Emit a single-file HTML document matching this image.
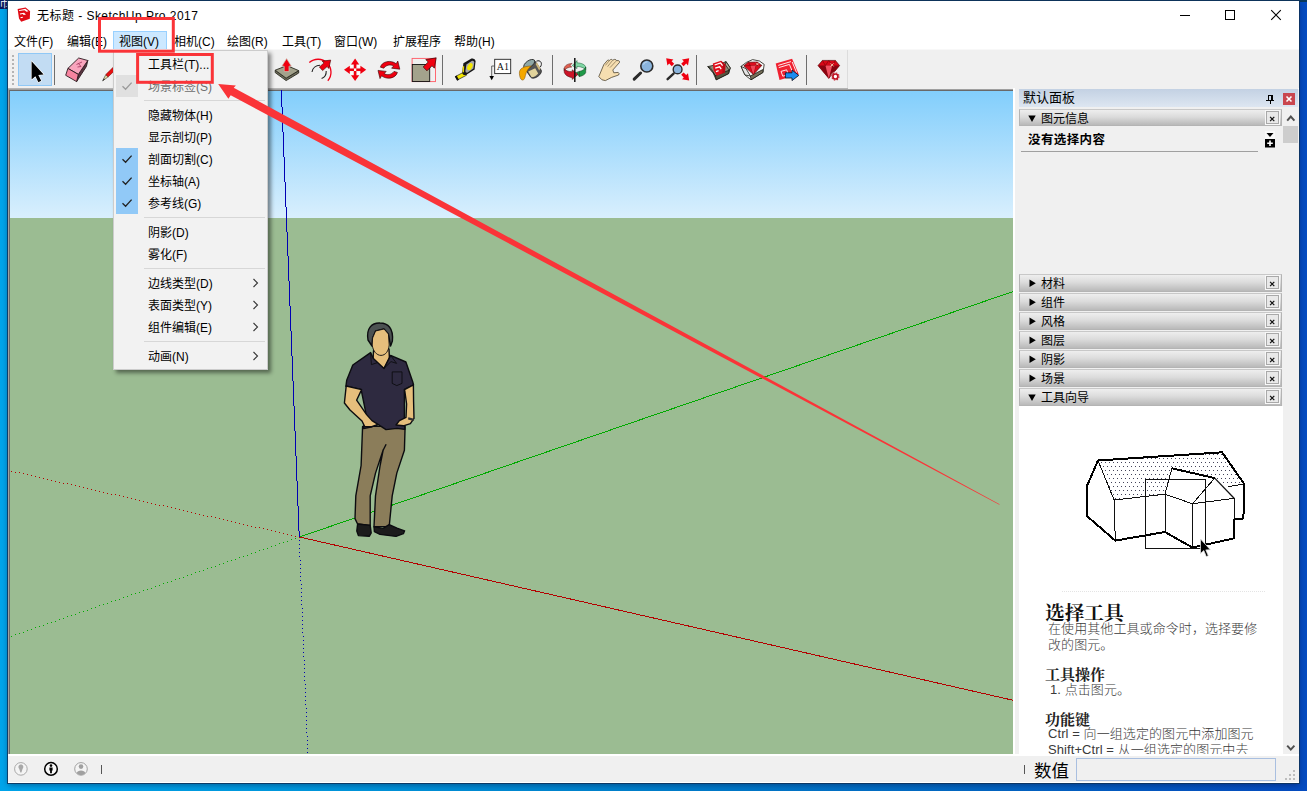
<!DOCTYPE html>
<html lang="zh-CN">
<head>
<meta charset="utf-8">
<title>无标题 - SketchUp Pro 2017</title>
<style>
*{box-sizing:border-box;margin:0;padding:0}
html,body{width:1307px;height:791px;overflow:hidden}
body{position:relative;font-family:"Liberation Sans","Noto Sans CJK SC",sans-serif;font-size:12px;color:#000;
 background:linear-gradient(90deg,#00a4ea 0%,#0096dc 25%,#0080cc 48%,#0366c2 75%,#054bc0 100%)}
.abs,.abs-all>*{position:absolute}
svg{display:block;overflow:visible}
#desk-top{left:0;top:0;width:1307px;height:2px;background:#0b3a5c}
#desk-tl{left:0;top:0;width:8px;height:9px;background:#0a1a60;color:#fff;font-size:9px;line-height:9px;overflow:hidden}
#win{left:8px;top:1px;width:1291px;height:782px;background:#f0f0f0;outline:1px solid rgba(14,50,90,.85);box-shadow:0 2px 6px 0 rgba(0,0,40,.4);border-right:1px solid #fff}
#title{left:8px;top:1px;width:1291px;height:29px;background:#fff}
#title .t{left:29px;top:7px;font-size:12px;line-height:16px;white-space:nowrap;letter-spacing:.46px}
#menubar{left:8px;top:30px;width:1291px;height:19px;background:#fff}
#menubar span{position:absolute;top:4px;line-height:16px;white-space:nowrap}
#menusel{left:105px;top:1px;width:54px;height:19px;background:#cce8ff;border:1px solid #99d1ff}
#toolbar{left:8px;top:49px;width:1291px;height:39px;background:#f0f0f0;border-top:1px solid #f8f8f8}
#vp{left:10px;top:90px;width:1003px;height:664px;overflow:hidden}
#vpborder{left:8px;top:89px;width:1005px;height:2px;background:linear-gradient(#a0a0a0 0,#a0a0a0 1px,#696969 1px)}
#tbline{left:8px;top:88px;width:840px;height:1px;background:#b4b4b4}
#vpleft{left:8px;top:90px;width:2px;height:664px;background:linear-gradient(90deg,#a0a0a0 0,#a0a0a0 1px,#696969 1px)}
#vpright{left:1013px;top:88px;width:2px;height:667px;background:#fff}
/* status */
#status{left:8px;top:754px;width:1291px;height:29px;background:linear-gradient(#fff 0,#fff 1.6px,#f0f0f0 1.6px,#f0f0f0 28px,#fff 28px)}
/* panel */
#panel{left:1019px;top:89px;width:280px;height:666px;background:#f0f0f0}
.phead{left:0;top:0;width:279px;height:18px;background:linear-gradient(#c3d1e3,#dde6f1);font-size:13px;line-height:17px}
.sec{left:0;width:263px;height:18px;border:1px solid #b4b4b4;border-top-color:#c8c8c8;background:linear-gradient(#eeeeee 0%,#dcdcdc 45%,#b9b9b9 100%);font-size:12px;line-height:16px}
.sec .tri{position:absolute;left:9px;top:0;font-size:9px;line-height:16px}
.sec .lbl{position:absolute;left:21px;top:1px;line-height:16px}
.sec .x{position:absolute;right:1px;top:0px;width:15px;height:15px;border:1px solid #f8f8f8;outline:1px solid #a9a9a9;outline-offset:-2px;background:#e9e9e9;font-size:10px;line-height:12px;text-align:center}

.gh1{font-family:"Liberation Serif","Noto Serif CJK SC",serif;font-weight:bold;font-size:19.7px;line-height:24px;white-space:nowrap;color:#111}
.gh2{font-family:"Liberation Serif","Noto Serif CJK SC",serif;font-weight:bold;font-size:15px;line-height:20px;white-space:nowrap;color:#222}
.gb{font-size:13px;line-height:16px;white-space:nowrap;color:#3a3a3a;font-weight:300;letter-spacing:.08px}
/* dropdown */
#dd{left:113px;top:50px;width:155px;height:320px;background:#f2f2f2;border:1px solid #ccc;box-shadow:3px 3px 4px rgba(0,0,0,.45)}
#dd .it{position:absolute;left:2px;width:149px;height:22px;line-height:25px}
#dd .it .tx{position:absolute;left:32px;top:0;white-space:nowrap}
#dd .it .ck{position:absolute;left:0px;top:0;width:22px;height:22px;background:#91c9f7}
#dd .it.dis{color:#6d6d6d}
#dd .it.dis .ck{background:#e0e0e0}
#dd .sep{position:absolute;left:30px;width:121px;height:1px;background:#d7d7d7}
#dd .ar{position:absolute;left:135px;top:0}
</style>
</head>
<body>
<div id="desk-top" class="abs"></div>
<div id="desk-tl" class="abs">巾</div>
<div id="win" class="abs"></div>
<div id="title" class="abs">
<svg class="abs" style="left:0;top:0" width="1291" height="29" viewBox="8 1 1291 29">
<g><path d="M17.6 9.1 L25.6 7.6 L30.1 11.2 L29.8 18.7 L21.2 21.8 L19 18.5 Z" fill="#e00a14"/>
<path d="M18.9 10.3 L25.3 8.8 L28.5 11.2 L26.5 11.7 L24.5 10.2 L19.2 11.1 Z M19.8 13.4 L24 12.8 L26 14.6 L23.7 15 L22.8 14 L20.1 14.5 Z M20.3 17.3 L22.6 16.7 L23.2 17.6 L20.9 18.3 Z" fill="#fff"/></g>
<g stroke="#000" stroke-width="1" fill="none" shape-rendering="crispEdges">
<line x1="1180" y1="15.5" x2="1190" y2="15.5"/>
<rect x="1225.5" y="10.5" width="9" height="9"/>
</g>
<path d="M1271.2 10.2 L1280.8 19.8 M1280.8 10.2 L1271.2 19.8" stroke="#000" stroke-width="1.1" fill="none"/>
</svg><span class="abs t">无标题 - SketchUp Pro 2017</span></div>
<div id="menubar" class="abs">
  <div id="menusel" class="abs"></div>
  <span style="left:6px">文件(F)</span>
  <span style="left:59px">编辑(E)</span>
  <span style="left:111px">视图(V)</span>
  <span style="left:166px">相机(C)</span>
  <span style="left:219px">绘图(R)</span>
  <span style="left:274px">工具(T)</span>
  <span style="left:326px">窗口(W)</span>
  <span style="left:385px">扩展程序</span>
  <span style="left:446px">帮助(H)</span>
</div>
<div id="toolbar" class="abs"><!--TB0--><svg class="abs" style="left:0;top:0" width="1291" height="38" viewBox="8 50 1291 38">
<!-- grip -->
<g fill="#b4b4b4" shape-rendering="crispEdges"><rect x="12" y="55" width="2" height="2"/><rect x="12" y="59" width="2" height="2"/><rect x="12" y="63" width="2" height="2"/><rect x="12" y="67" width="2" height="2"/><rect x="12" y="71" width="2" height="2"/><rect x="12" y="75" width="2" height="2"/><rect x="12" y="79" width="2" height="2"/><rect x="12" y="83" width="2" height="2"/></g>
<!-- select -->
<rect x="18.5" y="53.5" width="33" height="32" fill="#c2dcf3" stroke="#90c8f6"/>
<path d="M31.6 61.2 V79.6 L35.4 76.2 L38.4 82.2 L41.2 80.8 L38.3 75 L43.6 74.4 Z" fill="#000" stroke="#fff" stroke-width="1.2" stroke-linejoin="round" paint-order="stroke"/>
<!-- separators -->
<g stroke="#6e6e6e" stroke-width="1" shape-rendering="crispEdges"><line x1="54.5" y1="55" x2="54.5" y2="85"/><line x1="442.5" y1="55" x2="442.5" y2="85"/><line x1="552.5" y1="55" x2="552.5" y2="85"/><line x1="696.5" y1="55" x2="696.5" y2="85"/><line x1="806.5" y1="55" x2="806.5" y2="85"/></g>
<line x1="847.5" y1="50" x2="847.5" y2="88" stroke="#dcdcdc" stroke-width="1"/>
<!-- eraser -->
<g stroke="#2a1a1e" stroke-width="0.9" stroke-linejoin="round">
<path d="M87.8 60.5 L78.3 74.4 L76.6 81.6 L86.4 66.5 Z" fill="#5a3440"/>
<path d="M78.7 58 L87.8 60.5 L78.3 74.4 L67.9 68.4 Z" fill="#f9a5bd"/>
<path d="M67.9 68.4 L78.3 74.4 L76.6 81.6 L65.7 75.3 Z" fill="#f7849f"/>
</g>
<path d="M76.5 64.5 L82 62 M77.5 67 L81 66.5 L78.5 63.5" stroke="#a03058" stroke-width="0.8" fill="none"/>
<!-- pencil -->
<path d="M102.6 80.9 L105.8 74.6 L108.2 76.8 Z" fill="#e8dca0" stroke="#333" stroke-width="0.6"/>
<path d="M102.6 80.9 L103.9 78.4 L104.8 79.3 Z" fill="#111"/>
<path d="M105.8 74.6 L118 62.5 L120.5 65 L108.2 76.8 Z" fill="#e81010" stroke="#700" stroke-width="0.6"/>
<!-- push/pull -->
<g stroke="#2b2b22" stroke-width="0.9" stroke-linejoin="round">
<path d="M275.2 70.2 V72.6 L286.1 80.6 L298.7 73 V70.6 L286.1 78.2 Z" fill="#6f6e5a"/>
<path d="M275.2 70.2 L286.9 65.6 L298.7 70.6 L286.1 78.2 Z" fill="#a3a28c"/>
</g>
<path d="M284.2 71.6 V66.2 H281.8 L286.6 58.6 L291.4 66.2 H289 V71.6 Z" fill="#f00010" stroke="#c8c8b8" stroke-width="0.7"/>
<!-- follow me -->
<path d="M309.3 62.6 A13 13 0 0 1 327.8 80.8" fill="none" stroke="#f00018" stroke-width="1.3"/>
<path d="M312 72 C312.5 68 316 65.4 320 65.2 M321.6 78.6 C324.6 77.4 326.4 74.6 326.2 71" fill="none" stroke="#222" stroke-width="1.1"/>
<path d="M330.7 60.1 L322.2 61.1 L323.9 63 L319.4 67 L322.6 70.6 L327.1 66.6 L328.8 68.5 Z" fill="#f00010" stroke="#400" stroke-width="0.6" stroke-linejoin="round"/>
<!-- move -->
<g fill="#f00010">
<path d="M355.1 58.6 L359.2 64.4 H356.4 V68.6 H353.8 V64.4 H351 Z"/>
<path d="M355.1 81 L359.2 75.2 H356.4 V71 H353.8 V75.2 H351 Z"/>
<path d="M344 69.8 L349.8 65.7 V68.5 H354 V71.1 H349.8 V73.9 Z"/>
<path d="M366.2 69.8 L360.4 65.7 V68.5 H356.2 V71.1 H360.4 V73.9 Z"/>
</g>
<g fill="#fff"><rect x="350.4" y="65" width="2.4" height="2.4"/><rect x="357.4" y="65" width="2.4" height="2.4"/><rect x="350.4" y="72.2" width="2.4" height="2.4"/><rect x="357.4" y="72.2" width="2.4" height="2.4"/><rect x="354.1" y="68.8" width="2" height="2"/></g>
<!-- rotate -->
<g fill="#f00010" stroke="#300" stroke-width="0.6" stroke-linejoin="round">
<path d="M380.4 67.2 C381.8 61.4 390.8 59.4 396.2 63.8 L397.8 61 L399.8 69.2 L391.6 68.2 L393.6 66 C390.6 64 386 65 383.8 68.2 Z"/>
<path d="M397.4 72.4 C396 78.2 387 80.2 381.6 75.8 L380 78.6 L378 70.4 L386.2 71.4 L384.2 73.6 C387.2 75.6 391.8 74.6 394 71.4 Z"/>
</g>
<!-- scale -->
<rect x="412.1" y="58.4" width="23.4" height="23.2" fill="none" stroke="#ff5a64" stroke-width="0.9"/>
<rect x="412.3" y="64.5" width="17.4" height="17" fill="#a3a28c" stroke="#111" stroke-width="0.9"/>
<path d="M436.2 57.8 L425.8 59.6 L428.2 62 L423.2 67 L427 70.8 L432 65.8 L434.4 68.2 Z" fill="#f00010" stroke="#300" stroke-width="0.7" stroke-linejoin="round"/>
<!-- tape measure -->
<path d="M455.6 76.4 L464.8 71.6 L466.6 75.2 L457.4 80 Z" fill="#f5e800" stroke="#222" stroke-width="0.7"/>
<path d="M454.8 76.4 L457.2 80.8 L459 79.8 L456.6 75.4 Z" fill="#111"/>
<path d="M463.4 63.2 L471.4 58.6 Q475 57.8 475.6 61 L474.6 69.4 L466 75 Q462.6 75.6 462.2 72.4 Z" fill="#161616"/>
<path d="M466.4 64.6 L472 60.8 Q474.2 60.4 474.2 62.6 L473.4 68.4 L467.2 72.8 Q465.4 73 465.4 71 Z" fill="#a9a9a9"/>
<ellipse cx="469.9" cy="66.6" rx="2.3" ry="3.8" transform="rotate(28 469.9 66.6)" fill="#f5e800"/>
<path d="M462.6 66.8 L464.2 65.8 L464 72 L462.6 72.8 Z" fill="#e8d800"/>
<!-- text tool -->
<rect x="494.7" y="59.3" width="16" height="14.3" fill="#fff" stroke="#222" stroke-width="0.9"/>
<text x="502.8" y="69.6" font-family="Liberation Serif,serif" font-size="10" text-anchor="middle" fill="#111">A1</text>
<path d="M494.7 66 H491.7 V76.4" fill="none" stroke="#555" stroke-width="0.9"/>
<path d="M489.4 76 H494 L491.7 80.2 Z" fill="#000"/>
<!-- paint bucket -->
<path d="M536.4 61.2 C540.6 59.4 543 63.6 540.2 67.2" fill="none" stroke="#222" stroke-width="1"/>
<path d="M524 67.5 L530.7 77.2 A6.3 3.4 -35 0 0 541.1 70 L534.4 60.3 Z" fill="#555" stroke="#222" stroke-width="0.8" stroke-linejoin="round"/>
<path d="M528.2 71.6 L535.2 68.2 L538.2 73.4 Q535.4 77 531.6 77.2 Z" fill="#e2d49c"/>
<path d="M537 62.6 L540.4 68.6 L539.2 70.4 L535.6 64 Z" fill="#cdb87c"/>
<ellipse cx="529.2" cy="63.9" rx="6.3" ry="3.2" transform="rotate(-35 529.2 63.9)" fill="#8fa8a6" stroke="#222" stroke-width="0.8"/>
<path d="M519.4 73.6 C519 68.4 523.6 66.2 531.4 66 C528.6 68.2 526.4 70.8 525.4 75.6 C524.8 78.8 523.6 80.6 522 80 C520.4 79.4 519.6 76.6 519.4 73.6 Z" fill="#f5a800" stroke="#7a4a00" stroke-width="0.5"/>
<!-- orbit -->
<g stroke-width="0.5" stroke-linejoin="round">
<path d="M572.3 65.6 L577 60.6 L577 62.8 C581.5 63 585 64.6 585.7 67 L585.7 70 C584.6 68 581.4 66.6 577 66.4 L577 68.6 Z" fill="#7fd6a4" stroke="#145a30"/>
<path d="M585.7 67 L585.7 72.6 C585 74.6 582.4 76 579.4 76.6 L579.4 71.4 C582.4 70.8 585 69.2 585.7 67 Z" fill="#1f9a48" stroke="#0a3a1a"/>
<path d="M579.4 71.4 L576.4 72.4 L579.4 76.6 Z" fill="#1f9a48" stroke="#0a3a1a"/>
<path d="M572 63.4 C568 63.6 564.6 65.4 564.2 68.4 L564.2 71 C565 68.6 568 67.2 571.8 67 L570 65.4 Z" fill="#e06050" stroke="#5a1410"/>
<path d="M564.2 68.6 L564.2 72.2 C565 75.2 568.6 77.2 572.2 77.6 L572.2 79.4 L578 74.4 L572.2 69.8 L572.2 71.8 C568.6 71.6 565 70.6 564.2 68.6 Z" fill="#cc1428" stroke="#3a0a0a"/>
</g>
<line x1="574.8" y1="58" x2="574.8" y2="82" stroke="#111" stroke-width="1.5"/>
<!-- pan hand -->
<path d="M598.8 76.6 L603.8 64.6 L607.4 60.4 Q608.6 59.6 609.2 60.6 L610.6 59.6 Q612 59 612.6 60.2 L614.6 59.4 Q616 59.2 616.4 60.6 L618.4 60.6 Q620 61 619.4 62.6 L612.8 70 L613.8 72.8 L618.2 72.4 Q619.8 73.4 618.6 75 L611.6 77.4 L605.4 80.6 Q601.8 81 598.8 76.6 Z" fill="#f6deb0" stroke="#3a3020" stroke-width="0.7" stroke-linejoin="round"/>
<path d="M605.4 65.4 L609 61 M607.6 66.6 L612.2 60.8 M610 67.6 L616 61.2" stroke="#6a5a40" stroke-width="0.6" fill="none"/>
<!-- zoom -->
<line x1="640.6" y1="73" x2="634.2" y2="79.2" stroke="#2a2a2a" stroke-width="3" stroke-linecap="round"/>
<circle cx="646.8" cy="66" r="6" fill="#8ab4dc" stroke="#2a2a2a" stroke-width="1.6"/>
<path d="M643.4 64.6 A4 4 0 0 1 647.4 62" fill="none" stroke="#b8d4ee" stroke-width="1.2"/>
<!-- zoom extents -->
<line x1="673.6" y1="73.6" x2="667.6" y2="79.2" stroke="#2a2a2a" stroke-width="2.4" stroke-linecap="round"/>
<circle cx="677.6" cy="69.4" r="4.4" fill="#8ab4dc" stroke="#2a2a2a" stroke-width="1.4"/>
<g fill="#f00010">
<path d="M666.2 58.2 L673.4 59.4 L671.6 61.2 L674.2 63.8 L671.8 66.2 L669.2 63.6 L667.4 65.4 Z"/>
<path d="M689.2 58.2 L682 59.4 L683.8 61.2 L681.2 63.8 L683.6 66.2 L686.2 63.6 L688 65.4 Z"/>
<path d="M689.2 80.4 L682 79.2 L683.8 77.4 L681.2 74.8 L683.6 72.4 L686.2 75 L688 73.2 Z"/>
</g>
<!-- 3d warehouse -->
<g stroke="#1c1c14" stroke-width="0.8" stroke-linejoin="round">
<path d="M707.8 66.6 L713.2 65.4 L723.6 62.6 L726 61.6 L730.3 68 L728.6 73.6 L716.2 79.8 L713 72.6 Z" fill="#8c8b78"/>
<path d="M716.2 79.8 L715.4 75.6 L729.2 70.2 L728.6 73.6 Z" fill="#55543f"/>
<path d="M707.8 66.6 L713 72.6 L715.4 75.6 L711 68.4 Z" fill="#b4b3a0"/>
<path d="M726 61.6 L730.3 68 L729.2 70.2 L725.4 64.8 Z" fill="#b4b3a0"/>
</g>
<path d="M712.8 63.4 L721 60.8 L725.4 64.6 L725 72.6 L716.8 75.8 L713.6 70.4 Z" fill="#e0101c"/>
<path d="M721 60.8 L725.4 64.6 L725 72.6 L722.4 73.6 L722.6 65.4 Z" fill="#b80c16"/>
<path d="M714.6 65 L720.6 63 L722.6 65.6 M715.2 68.2 L719.6 66.8 L721.2 69.2 M716 71.6 L718.6 70.6" stroke="#fff" stroke-width="1.25" fill="none"/>
<!-- extension warehouse -->
<g stroke="#1c1c14" stroke-width="0.8" stroke-linejoin="round">
<path d="M741 66.4 L746.4 62.4 L752.6 59.6 L759.4 61 L764.2 64.4 L763 72.4 L751 79.8 L745 75 Z" fill="#fafafa"/>
<path d="M751 79.8 L750.4 76 L762.8 69.6 L763 72.4 Z" fill="#77705a"/>
<path d="M741 66.4 L745 75 L750.4 76 L746 68.6 Z" fill="#e4e4e4"/>
<path d="M743.8 65.8 L748.2 62.2 L757.2 62 L761.8 65.4 L753.4 74.6 Z" fill="#dc0c1c" stroke="#400" stroke-width="0.6"/>
</g>
<path d="M743.8 65.8 L761.8 65.4 M748.2 62.2 L750.4 65.7 L753.4 74.6 L755.6 65.6 L757.2 62" stroke="#600" stroke-width="0.5" fill="none"/>
<path d="M750.4 65.7 L753.4 74.6 L755.6 65.6 Z" fill="#f04858"/>
<path d="M756 62.8 L758.6 65.4 M758.6 62.8 L756 65.4" stroke="#ffe8c8" stroke-width="0.7"/>
<!-- layout -->
<path d="M775.7 63.5 L792.1 58.8 L798.8 74.4 L779.5 79.9 Z" fill="#f02030"/>
<path d="M778.2 65.4 L791 61.6 M778.8 67.6 L789.4 64.4 L792.4 71.6 M781 71.4 L786.6 69.8 L788.4 74.6 L782.8 76.2 Z M792.2 62 L796.6 72.6" stroke="#fff" stroke-width="0.9" fill="none"/>
<path d="M785.4 72.8 H792 V70 L798.8 75.4 L792 80.6 V78 H785.4 Z" fill="#1a8cf0" stroke="#0a1020" stroke-width="0.8" stroke-linejoin="round"/>
<!-- ruby -->
<path d="M818 65.6 L822.4 60.4 L835.4 60.4 L839.6 65.6 L828.8 78.4 Z" fill="#d80818" stroke="#400" stroke-width="0.6" stroke-linejoin="round"/>
<path d="M818 65.6 H839.6 L828.8 78.4 Z" fill="#8a0410"/>
<path d="M825.4 65.6 L828.8 78.4 L832.2 65.6 Z" fill="#f05060"/>
<path d="M822.4 60.4 L825.4 65.6 L828.8 60.4 L832.2 65.6 L835.4 60.4" stroke="#600" stroke-width="0.5" fill="none"/>
<path d="M830.6 63.4 L833.6 66.4 M833.6 63.4 L830.6 66.4" stroke="#ffe8c8" stroke-width="0.8"/>
<circle cx="835.4" cy="76.5" r="2.5" fill="#fff" stroke="#c01424" stroke-width="1.7"/>
<circle cx="835.4" cy="76.5" r="3.8" fill="none" stroke="#c01424" stroke-width="1.1" stroke-dasharray="1.5 1.48"/>
<circle cx="835.4" cy="76.5" r="4.5" fill="none" stroke="#f0f0f0" stroke-width="0.5"/>
</svg>
<!--TB1--></div>
<div id="tbline" class="abs"></div>
<div id="vpborder" class="abs"></div>
<div id="vpleft" class="abs"></div>
<div id="vpright" class="abs"></div>
<div id="vp" class="abs">
<svg width="1004" height="664" viewBox="10 90 1004 664">
  <defs><linearGradient id="sky" x1="0" y1="0" x2="0" y2="1"><stop offset="0" stop-color="#82cefc"/><stop offset="1" stop-color="#d9effd"/></linearGradient></defs>
  <rect x="10" y="91" width="1004" height="127" fill="url(#sky)"/>
  <rect x="10" y="218" width="1004" height="536" fill="#9bbc92"/>
  <g shape-rendering="crispEdges" fill="none" stroke-width="1">
    <g fill="#b40000"><rect x="295" y="536" width="1" height="1"/><rect x="291" y="535" width="1" height="1"/><rect x="287" y="534" width="1" height="1"/><rect x="283" y="533" width="1" height="1"/><rect x="279" y="532" width="1" height="1"/><rect x="275" y="531" width="1" height="1"/><rect x="271" y="530" width="1" height="1"/><rect x="267" y="529" width="1" height="1"/><rect x="263" y="528" width="1" height="1"/><rect x="259" y="527" width="1" height="1"/><rect x="255" y="527" width="1" height="1"/><rect x="251" y="526" width="1" height="1"/><rect x="247" y="525" width="1" height="1"/><rect x="243" y="524" width="1" height="1"/><rect x="239" y="523" width="1" height="1"/><rect x="235" y="522" width="1" height="1"/><rect x="231" y="521" width="1" height="1"/><rect x="227" y="520" width="1" height="1"/><rect x="223" y="519" width="1" height="1"/><rect x="219" y="518" width="1" height="1"/><rect x="215" y="517" width="1" height="1"/><rect x="211" y="516" width="1" height="1"/><rect x="207" y="516" width="1" height="1"/><rect x="203" y="515" width="1" height="1"/><rect x="199" y="514" width="1" height="1"/><rect x="195" y="513" width="1" height="1"/><rect x="191" y="512" width="1" height="1"/><rect x="187" y="511" width="1" height="1"/><rect x="183" y="510" width="1" height="1"/><rect x="179" y="509" width="1" height="1"/><rect x="175" y="508" width="1" height="1"/><rect x="171" y="507" width="1" height="1"/><rect x="167" y="506" width="1" height="1"/><rect x="163" y="505" width="1" height="1"/><rect x="159" y="505" width="1" height="1"/><rect x="155" y="504" width="1" height="1"/><rect x="151" y="503" width="1" height="1"/><rect x="147" y="502" width="1" height="1"/><rect x="143" y="501" width="1" height="1"/><rect x="139" y="500" width="1" height="1"/><rect x="135" y="499" width="1" height="1"/><rect x="131" y="498" width="1" height="1"/><rect x="127" y="497" width="1" height="1"/><rect x="123" y="496" width="1" height="1"/><rect x="119" y="495" width="1" height="1"/><rect x="115" y="494" width="1" height="1"/><rect x="111" y="494" width="1" height="1"/><rect x="107" y="493" width="1" height="1"/><rect x="103" y="492" width="1" height="1"/><rect x="99" y="491" width="1" height="1"/><rect x="95" y="490" width="1" height="1"/><rect x="91" y="489" width="1" height="1"/><rect x="87" y="488" width="1" height="1"/><rect x="83" y="487" width="1" height="1"/><rect x="79" y="486" width="1" height="1"/><rect x="75" y="485" width="1" height="1"/><rect x="71" y="484" width="1" height="1"/><rect x="67" y="483" width="1" height="1"/><rect x="63" y="483" width="1" height="1"/><rect x="59" y="482" width="1" height="1"/><rect x="55" y="481" width="1" height="1"/><rect x="51" y="480" width="1" height="1"/><rect x="47" y="479" width="1" height="1"/><rect x="43" y="478" width="1" height="1"/><rect x="39" y="477" width="1" height="1"/><rect x="35" y="476" width="1" height="1"/><rect x="31" y="475" width="1" height="1"/><rect x="27" y="474" width="1" height="1"/><rect x="23" y="473" width="1" height="1"/><rect x="19" y="472" width="1" height="1"/><rect x="15" y="472" width="1" height="1"/><rect x="11" y="471" width="1" height="1"/></g>
    <g fill="#00aa00"><rect x="295" y="538" width="1" height="1"/><rect x="291" y="539" width="1" height="1"/><rect x="287" y="541" width="1" height="1"/><rect x="283" y="542" width="1" height="1"/><rect x="279" y="543" width="1" height="1"/><rect x="275" y="545" width="1" height="1"/><rect x="271" y="546" width="1" height="1"/><rect x="267" y="548" width="1" height="1"/><rect x="263" y="549" width="1" height="1"/><rect x="259" y="550" width="1" height="1"/><rect x="255" y="552" width="1" height="1"/><rect x="251" y="553" width="1" height="1"/><rect x="247" y="555" width="1" height="1"/><rect x="243" y="556" width="1" height="1"/><rect x="239" y="557" width="1" height="1"/><rect x="235" y="559" width="1" height="1"/><rect x="231" y="560" width="1" height="1"/><rect x="227" y="561" width="1" height="1"/><rect x="223" y="563" width="1" height="1"/><rect x="219" y="564" width="1" height="1"/><rect x="215" y="566" width="1" height="1"/><rect x="211" y="567" width="1" height="1"/><rect x="207" y="568" width="1" height="1"/><rect x="203" y="570" width="1" height="1"/><rect x="199" y="571" width="1" height="1"/><rect x="195" y="572" width="1" height="1"/><rect x="191" y="574" width="1" height="1"/><rect x="187" y="575" width="1" height="1"/><rect x="183" y="577" width="1" height="1"/><rect x="179" y="578" width="1" height="1"/><rect x="175" y="579" width="1" height="1"/><rect x="171" y="581" width="1" height="1"/><rect x="167" y="582" width="1" height="1"/><rect x="163" y="583" width="1" height="1"/><rect x="159" y="585" width="1" height="1"/><rect x="155" y="586" width="1" height="1"/><rect x="151" y="588" width="1" height="1"/><rect x="147" y="589" width="1" height="1"/><rect x="143" y="590" width="1" height="1"/><rect x="139" y="592" width="1" height="1"/><rect x="135" y="593" width="1" height="1"/><rect x="131" y="594" width="1" height="1"/><rect x="127" y="596" width="1" height="1"/><rect x="123" y="597" width="1" height="1"/><rect x="119" y="599" width="1" height="1"/><rect x="115" y="600" width="1" height="1"/><rect x="111" y="601" width="1" height="1"/><rect x="107" y="603" width="1" height="1"/><rect x="103" y="604" width="1" height="1"/><rect x="99" y="605" width="1" height="1"/><rect x="95" y="607" width="1" height="1"/><rect x="91" y="608" width="1" height="1"/><rect x="87" y="610" width="1" height="1"/><rect x="83" y="611" width="1" height="1"/><rect x="79" y="612" width="1" height="1"/><rect x="75" y="614" width="1" height="1"/><rect x="71" y="615" width="1" height="1"/><rect x="67" y="616" width="1" height="1"/><rect x="63" y="618" width="1" height="1"/><rect x="59" y="619" width="1" height="1"/><rect x="55" y="621" width="1" height="1"/><rect x="51" y="622" width="1" height="1"/><rect x="47" y="623" width="1" height="1"/><rect x="43" y="625" width="1" height="1"/><rect x="39" y="626" width="1" height="1"/><rect x="35" y="627" width="1" height="1"/><rect x="31" y="629" width="1" height="1"/><rect x="27" y="630" width="1" height="1"/><rect x="23" y="632" width="1" height="1"/><rect x="19" y="633" width="1" height="1"/><rect x="15" y="634" width="1" height="1"/><rect x="11" y="636" width="1" height="1"/></g>
    <g fill="#0000b4"><rect x="299" y="540" width="1" height="1"/><rect x="299" y="544" width="1" height="1"/><rect x="299" y="548" width="1" height="1"/><rect x="299" y="552" width="1" height="1"/><rect x="299" y="556" width="1" height="1"/><rect x="300" y="560" width="1" height="1"/><rect x="300" y="564" width="1" height="1"/><rect x="300" y="568" width="1" height="1"/><rect x="300" y="572" width="1" height="1"/><rect x="300" y="576" width="1" height="1"/><rect x="300" y="580" width="1" height="1"/><rect x="301" y="584" width="1" height="1"/><rect x="301" y="588" width="1" height="1"/><rect x="301" y="592" width="1" height="1"/><rect x="301" y="596" width="1" height="1"/><rect x="301" y="600" width="1" height="1"/><rect x="301" y="604" width="1" height="1"/><rect x="302" y="608" width="1" height="1"/><rect x="302" y="612" width="1" height="1"/><rect x="302" y="616" width="1" height="1"/><rect x="302" y="620" width="1" height="1"/><rect x="302" y="624" width="1" height="1"/><rect x="302" y="628" width="1" height="1"/><rect x="302" y="632" width="1" height="1"/><rect x="303" y="636" width="1" height="1"/><rect x="303" y="640" width="1" height="1"/><rect x="303" y="644" width="1" height="1"/><rect x="303" y="648" width="1" height="1"/><rect x="303" y="652" width="1" height="1"/><rect x="303" y="656" width="1" height="1"/><rect x="304" y="660" width="1" height="1"/><rect x="304" y="664" width="1" height="1"/><rect x="304" y="668" width="1" height="1"/><rect x="304" y="672" width="1" height="1"/><rect x="304" y="676" width="1" height="1"/><rect x="304" y="680" width="1" height="1"/><rect x="305" y="684" width="1" height="1"/><rect x="305" y="688" width="1" height="1"/><rect x="305" y="692" width="1" height="1"/><rect x="305" y="696" width="1" height="1"/><rect x="305" y="700" width="1" height="1"/><rect x="305" y="704" width="1" height="1"/><rect x="306" y="708" width="1" height="1"/><rect x="306" y="712" width="1" height="1"/><rect x="306" y="716" width="1" height="1"/><rect x="306" y="720" width="1" height="1"/><rect x="306" y="724" width="1" height="1"/><rect x="306" y="728" width="1" height="1"/><rect x="306" y="732" width="1" height="1"/><rect x="307" y="736" width="1" height="1"/><rect x="307" y="740" width="1" height="1"/><rect x="307" y="744" width="1" height="1"/><rect x="307" y="748" width="1" height="1"/><rect x="307" y="752" width="1" height="1"/></g>
    <line x1="299.5" y1="537" x2="1014" y2="291.2" stroke="#00aa00"/>
    <line x1="299.5" y1="537" x2="1014" y2="700.5" stroke="#b40000"/>
    <line x1="299.25" y1="537" x2="281.35" y2="90" stroke="#0000b4"/>
  </g>
  <!--P0--><g stroke="#0c0c10" stroke-width="1.4" stroke-linejoin="round">
<!-- pants -->
<path d="M362.6 426.4 L361.1 465.5 L355.8 495.9 L355 518.6 L357.6 524 L370.2 525.4 L370.2 495.9 L375.5 473.1 L383.1 450.3 L380.1 465.5 L375.5 495.9 L374 526.8 L389.2 526.4 L392.2 495.9 L396.8 473.1 L404.4 450.3 L405.1 426.4 Z" fill="#8b7d5a"/>
<path d="M386.1 444.3 L383.1 450.3" fill="none"/>
<!-- shoes -->
<path d="M357.6 524 L356.8 531 L358.4 535.6 L369.4 536.2 L371.2 533 L370.2 525.4 Z" fill="#1c1c1c"/>
<path d="M374 526.8 L374.4 531.6 L380 534.4 L396 536.4 L403.4 533.6 L404.6 530.8 L397 528.2 L389.2 524.6 L383 528.4 Z" fill="#1c1c1c"/>
<!-- neck -->
<path d="M373.6 350 L373 360 L384 369 L389.4 358 L389 349 Z" fill="#e6bf7c"/>
<!-- shirt -->
<path d="M370.6 352.6 L352.8 365 L346.7 380.3 L345.9 386.3 L361.1 389.4 L365.7 412.1 L363.6 428.6 L371 427 L378.4 424.6 L386 429.6 L397 428.4 L404.8 429.4 L404.4 418.2 L404.4 389.4 L413.5 384.8 L412.7 381.8 L405.9 362 L390.6 355.4 L384 368.4 L373.4 358.6 Z" fill="#2e2a40"/>
<path d="M392.2 371.9 H402 V383.4 L396.8 385.6 L392.2 383.4 Z" fill="#2e2a40" stroke-width="0.9"/>
<path d="M370.6 352.6 L371.4 364.6 L377.6 362.6 M390.6 355.4 L396.6 363.4 L391 361.6 L384 368.4" fill="none" stroke-width="0.9"/>
<!-- arms -->
<path d="M346.2 386 L344.4 403 L350 410 L362 421 L364.6 426.4 L371 426.8 L378 424.4 L372 420.6 L366.6 414.6 L356.6 400.2 L361.6 389.6 Z" fill="#e6bf7c"/>
<path d="M404.6 389.6 L406.6 404 L406 417.4 L399.4 420.6 L396 425 L403.4 425.8 L410.4 423.6 L414 418.4 L413.6 402 L413.4 385 Z" fill="#e6bf7c"/>
<!-- head -->
<path d="M368 340 C366 328 372 322.6 380 323 C388 323.2 393.6 328 392.4 341 L390.6 346 L388.4 334 L384 329 L375.6 331 L372.6 338 L372 346 Z" fill="#4c5252"/>
<path d="M372.6 338 L375.6 331 L384 329 L388.4 334 L389.2 345 C388.6 351 385.6 355.4 381 355.4 C376.6 355.4 373 351 372.2 345 Z" fill="#e6bf7c" stroke-width="0.9"/>
</g>
<path d="M408.4 417.2 L414 418.8 L413.6 421 L408 419.4 Z" fill="#333"/>
<!--P1-->
</svg>
</div>
<div id="panel" class="abs">
<div class="abs phead"><span class="abs" style="left:4px;top:0">默认面板</span><svg class="abs" style="left:246px;top:4px" width="10" height="11"><path d="M2.5 2 H7.5 M3 2 V7 M7 2 V7 M6 2 V7 M1 7.5 H9 M5 8 V10.5" stroke="#000" stroke-width="1" fill="none" shape-rendering="crispEdges"/></svg><div class="abs" style="left:264px;top:4px;width:12px;height:12px;background:#c9464e"><svg width="12" height="12"><path d="M3.5 3.5 L8.5 8.5 M8.5 3.5 L3.5 8.5" stroke="#fff" stroke-width="1.6"/></svg></div></div>
<div class="abs sec" style="top:20px;height:17px"><svg class="abs" style="left:8px;top:5px" width="8" height="8"><path d="M0.3 0.5 H7.7 L4 7 Z" fill="#000"/></svg><span class="lbl">图元信息</span><div class="x"><svg width="13" height="13"><path d="M4.1 5.9 L8.3 10.1 M8.3 5.9 L4.1 10.1" stroke="#111" stroke-width="1.2"/></svg></div></div>
<div class="abs sec" style="top:185px"><svg class="abs" style="left:9px;top:4px" width="8" height="9"><path d="M0.5 0.5 V7.9 L6.8 4.2 Z" fill="#000"/></svg><span class="lbl">材料</span><div class="x"><svg width="13" height="13"><path d="M4.1 5.9 L8.3 10.1 M8.3 5.9 L4.1 10.1" stroke="#111" stroke-width="1.2"/></svg></div></div>
<div class="abs sec" style="top:204px"><svg class="abs" style="left:9px;top:4px" width="8" height="9"><path d="M0.5 0.5 V7.9 L6.8 4.2 Z" fill="#000"/></svg><span class="lbl">组件</span><div class="x"><svg width="13" height="13"><path d="M4.1 5.9 L8.3 10.1 M8.3 5.9 L4.1 10.1" stroke="#111" stroke-width="1.2"/></svg></div></div>
<div class="abs sec" style="top:223px"><svg class="abs" style="left:9px;top:4px" width="8" height="9"><path d="M0.5 0.5 V7.9 L6.8 4.2 Z" fill="#000"/></svg><span class="lbl">风格</span><div class="x"><svg width="13" height="13"><path d="M4.1 5.9 L8.3 10.1 M8.3 5.9 L4.1 10.1" stroke="#111" stroke-width="1.2"/></svg></div></div>
<div class="abs sec" style="top:242px"><svg class="abs" style="left:9px;top:4px" width="8" height="9"><path d="M0.5 0.5 V7.9 L6.8 4.2 Z" fill="#000"/></svg><span class="lbl">图层</span><div class="x"><svg width="13" height="13"><path d="M4.1 5.9 L8.3 10.1 M8.3 5.9 L4.1 10.1" stroke="#111" stroke-width="1.2"/></svg></div></div>
<div class="abs sec" style="top:261px"><svg class="abs" style="left:9px;top:4px" width="8" height="9"><path d="M0.5 0.5 V7.9 L6.8 4.2 Z" fill="#000"/></svg><span class="lbl">阴影</span><div class="x"><svg width="13" height="13"><path d="M4.1 5.9 L8.3 10.1 M8.3 5.9 L4.1 10.1" stroke="#111" stroke-width="1.2"/></svg></div></div>
<div class="abs sec" style="top:280px"><svg class="abs" style="left:9px;top:4px" width="8" height="9"><path d="M0.5 0.5 V7.9 L6.8 4.2 Z" fill="#000"/></svg><span class="lbl">场景</span><div class="x"><svg width="13" height="13"><path d="M4.1 5.9 L8.3 10.1 M8.3 5.9 L4.1 10.1" stroke="#111" stroke-width="1.2"/></svg></div></div>
<div class="abs sec" style="top:299px"><svg class="abs" style="left:8px;top:5px" width="8" height="8"><path d="M0.3 0.5 H7.7 L4 7 Z" fill="#000"/></svg><span class="lbl">工具向导</span><div class="x"><svg width="13" height="13"><path d="M4.1 5.9 L8.3 10.1 M8.3 5.9 L4.1 10.1" stroke="#111" stroke-width="1.2"/></svg></div></div>
<div class="abs" style="left:9px;top:43px;font-weight:bold;font-size:12.5px;line-height:16px;white-space:nowrap;letter-spacing:.4px">没有选择内容</div>
<div class="abs" style="left:2px;top:62px;width:237px;height:1px;background:#a0a0a0"></div>
<svg class="abs" style="left:246px;top:42px" width="10" height="17"><rect x="0.5" y="0.5" width="9" height="7" fill="#fff" stroke="#000" stroke-width="0"/><rect x="0" y="0" width="10" height="8" fill="#f8f8f8"/><path d="M1.5 2 H8.5 L5 6 Z" fill="#000"/><rect x="0" y="8" width="10" height="8.5" fill="#000"/><path d="M5 9.5 V15 M2.2 12.2 H7.8" stroke="#fff" stroke-width="1.6"/></svg>
<div class="abs" style="left:264px;top:19px;width:16px;height:647px;background:#f0f0f0"></div>
<svg class="abs" style="left:267px;top:25px" width="10" height="8"><path d="M1.2 6.6 L4.8 2.6 L8.4 6.6" fill="none" stroke="#505050" stroke-width="2"/></svg>
<div class="abs" style="left:264px;top:37px;width:15px;height:17px;background:#cdcdcd"></div>
<svg class="abs" style="left:267px;top:655px" width="10" height="8"><path d="M1.2 1.6 L4.8 5.6 L8.4 1.6" fill="none" stroke="#505050" stroke-width="2"/></svg>
<div class="abs" id="guide" style="left:0;top:317px;width:264px;height:349px;background:#fff;overflow:hidden">
<svg class="abs" style="left:0;top:0" width="263" height="349" viewBox="1019 406 263 349">
<defs><pattern id="dots" width="4" height="8" patternUnits="userSpaceOnUse"><rect x="1" y="6" width="1" height="1" fill="#44445a"/><rect x="3" y="2" width="1" height="1" fill="#44445a"/></pattern></defs>
<path d="M1098.0 460.5 L1222.1 452.3 L1244.2 484.0 L1227.8 486.8 L1214.7 478.1 L1171.9 468.3 L1165.0 494.2 L1114.1 500.0 Z" fill="url(#dots)" shape-rendering="crispEdges"/>
<path d="M1098.0 460.5 L1114.1 500.0" fill="none" stroke="#111" stroke-width="1" shape-rendering="crispEdges"/>
<path d="M1114.1 500.0 L1165.0 494.2" fill="none" stroke="#111" stroke-width="1" shape-rendering="crispEdges"/>
<path d="M1114.1 500.0 L1115.3 540.6" fill="none" stroke="#111" stroke-width="1" shape-rendering="crispEdges"/>
<path d="M1165.0 494.2 L1165.0 532.0" fill="none" stroke="#111" stroke-width="1" shape-rendering="crispEdges"/>
<path d="M1165.0 494.2 L1192.5 503.8" fill="none" stroke="#111" stroke-width="1" shape-rendering="crispEdges"/>
<path d="M1192.5 503.8 L1234.1 498.3" fill="none" stroke="#111" stroke-width="1" shape-rendering="crispEdges"/>
<path d="M1192.5 503.8 L1192.5 547.6" fill="none" stroke="#111" stroke-width="1" shape-rendering="crispEdges"/>
<path d="M1192.5 503.8 L1214.7 478.1" fill="none" stroke="#111" stroke-width="1" shape-rendering="crispEdges"/>
<path d="M1171.9 468.3 L1165.0 494.2" fill="none" stroke="#111" stroke-width="1" shape-rendering="crispEdges"/>
<path d="M1244.2 484.0 L1227.8 486.8" fill="none" stroke="#111" stroke-width="1" shape-rendering="crispEdges"/>
<path d="M1234.1 498.3 L1234.1 538.3" fill="none" stroke="#111" stroke-width="1" shape-rendering="crispEdges"/>
<path d="M1214.7 478.1 L1234.1 498.3" fill="none" stroke="#111" stroke-width="1.3"/>
<path d="M1098.0 460.5 L1222.1 452.3 L1244.2 484.0 L1243.4 518.5 L1234.1 519.5 L1234.1 538.3 L1192.5 547.6 L1165.0 532.0 L1115.3 540.6 L1087.3 516.4 L1087.3 485.2 Z" fill="none" stroke="#000" stroke-width="2" stroke-linejoin="round" shape-rendering="crispEdges"/>
<path d="M1171.9 468.3 L1214.7 478.1" fill="none" stroke="#000" stroke-width="2" shape-rendering="crispEdges"/>
<rect x="1145.7" y="479.4" width="59.9" height="68.7" fill="none" stroke="#111" stroke-width="1" shape-rendering="crispEdges"/>
<path d="M1200.5 539 L1200.5 553.5 L1203.8 550.6 L1206.3 556.6 L1208.3 555.7 L1205.8 549.9 L1210.3 549.7 Z" fill="#000" stroke="#ddd" stroke-width="0.8"/>
<line x1="1062" y1="591.5" x2="1266" y2="591.5" stroke="#e4e4e4" stroke-width="1" stroke-dasharray="1 1"/>
</svg>
<div class="abs gh1" style="left:26px;top:195px;">选择工具</div>
<div class="abs gb" style="left:29px;top:215px;">在使用其他工具或命令时，选择要修</div>
<div class="abs gb" style="left:29px;top:231px;">改的图元。</div>
<div class="abs gh2" style="left:26px;top:259px;">工具操作</div>
<div class="abs gb" style="left:31px;top:276px;">1. 点击图元。</div>
<div class="abs gh2" style="left:26px;top:304px;">功能键</div>
<div class="abs gb" style="left:29px;top:320px;">Ctrl = 向一组选定的图元中添加图元</div>
<div class="abs gb" style="left:29px;top:336px;">Shift+Ctrl = 从一组选定的图元中去</div>
</div>
</div>
<div id="status" class="abs">
<div class="abs" style="left:1016px;top:11px;width:1px;height:9px;background:#555"></div>
<div class="abs" style="left:1026px;top:5px;font-size:17.5px;line-height:24px;white-space:nowrap">数值</div>
<div class="abs" style="left:1068px;top:4px;width:200px;height:23px;border:1px solid #a9bfe0;background:#f0f0f0"></div>
<div class="abs" style="left:93px;top:11px;width:1px;height:9px;background:#555"></div>
<svg class="abs" style="left:0;top:0" width="100" height="28" viewBox="8 0 100 28">
<g fill="none" stroke-width="1">
<circle cx="20.9" cy="14.9" r="6.3" stroke="#a8a8a8" fill="#f4f4f4"/>
<path d="M20.9 10.4 C23.4 10.4 24 13 22.6 14.8 L21.4 18.6 H20.4 L19.2 14.8 C17.8 13 18.4 10.4 20.9 10.4 Z" fill="#a8a8a8" stroke="none"/>
<circle cx="51" cy="14.9" r="6.3" stroke="#000" stroke-width="1.5" fill="#f8f8f8"/>
<circle cx="51" cy="11.6" r="1.3" fill="#000" stroke="none"/>
<path d="M49.4 13.6 H52.6 V16.4 H51.9 V19.2 H50.1 V16.4 H49.4 Z" fill="#000" stroke="none"/>
<circle cx="81" cy="14.9" r="6.3" stroke="#a0a0a0" fill="#f4f4f4"/>
<circle cx="81" cy="12.6" r="2.3" fill="#a0a0a0" stroke="none"/>
<path d="M76.8 19.2 C77 15.6 85 15.6 85.2 19.2 C83 21.6 79 21.6 76.8 19.2 Z" fill="#a0a0a0" stroke="none"/>
</g></svg>
<svg class="abs" style="left:1277px;top:16px" width="11" height="11" shape-rendering="crispEdges"><g fill="#bdbdbd"><rect x="8" y="0" width="2" height="2"/><rect x="4" y="4" width="2" height="2"/><rect x="8" y="4" width="2" height="2"/><rect x="0" y="8" width="2" height="2"/><rect x="4" y="8" width="2" height="2"/><rect x="8" y="8" width="2" height="2"/></g></svg>
</div>
<div id="dd" class="abs">
<div class="it" style="top:1.5px"><span class="tx">工具栏(T)...</span></div>
<div class="it dis" style="top:23.5px"><div class="ck"><svg width="22" height="22"><path d="M6.5 11.2 L9.6 14.3 L15.6 7.6" fill="none" stroke="#9a9a9a" stroke-width="1.3"/></svg></div><span class="tx">场景标签(S)</span></div>
<div class="sep" style="top:48.5px"></div>
<div class="it" style="top:52.5px"><span class="tx">隐藏物体(H)</span></div>
<div class="it" style="top:74.5px"><span class="tx">显示剖切(P)</span></div>
<div class="it" style="top:96.5px"><div class="ck"><svg width="22" height="22"><path d="M6.5 11.2 L9.6 14.3 L15.6 7.6" fill="none" stroke="#222" stroke-width="1.3"/></svg></div><span class="tx">剖面切割(C)</span></div>
<div class="it" style="top:118.5px"><div class="ck"><svg width="22" height="22"><path d="M6.5 11.2 L9.6 14.3 L15.6 7.6" fill="none" stroke="#222" stroke-width="1.3"/></svg></div><span class="tx">坐标轴(A)</span></div>
<div class="it" style="top:140.5px"><div class="ck"><svg width="22" height="22"><path d="M6.5 11.2 L9.6 14.3 L15.6 7.6" fill="none" stroke="#222" stroke-width="1.3"/></svg></div><span class="tx">参考线(G)</span></div>
<div class="sep" style="top:165.5px"></div>
<div class="it" style="top:169.5px"><span class="tx">阴影(D)</span></div>
<div class="it" style="top:191.5px"><span class="tx">雾化(F)</span></div>
<div class="sep" style="top:216.5px"></div>
<div class="it" style="top:220.5px"><span class="tx">边线类型(D)</span><svg class="ar" width="10" height="22"><path d="M2.5 7 L6.5 11 L2.5 15" fill="none" stroke="#333" stroke-width="1.1"/></svg></div>
<div class="it" style="top:242.5px"><span class="tx">表面类型(Y)</span><svg class="ar" width="10" height="22"><path d="M2.5 7 L6.5 11 L2.5 15" fill="none" stroke="#333" stroke-width="1.1"/></svg></div>
<div class="it" style="top:264.5px"><span class="tx">组件编辑(E)</span><svg class="ar" width="10" height="22"><path d="M2.5 7 L6.5 11 L2.5 15" fill="none" stroke="#333" stroke-width="1.1"/></svg></div>
<div class="sep" style="top:289.5px"></div>
<div class="it" style="top:293.5px"><span class="tx">动画(N)</span><svg class="ar" width="10" height="22"><path d="M2.5 7 L6.5 11 L2.5 15" fill="none" stroke="#333" stroke-width="1.1"/></svg></div>
</div>
<!--A0-->
<svg class="abs" style="left:0;top:0;pointer-events:none" width="1307" height="791">
<rect x="99.5" y="18.5" width="73.8" height="32.7" fill="none" stroke="#fa3438" stroke-width="3"/>
<rect x="137.6" y="54.5" width="74.7" height="27.8" fill="none" stroke="#fa3438" stroke-width="3"/>
<path d="M218.2 83.9 L235.9 85.5 L233.7 87.7 L999.6 504.2 L999.3 504.8 L230.7 95.3 L228.4 98.7 Z" fill="#fa3438"/>
</svg>
<!--A1-->
</body>
</html>
